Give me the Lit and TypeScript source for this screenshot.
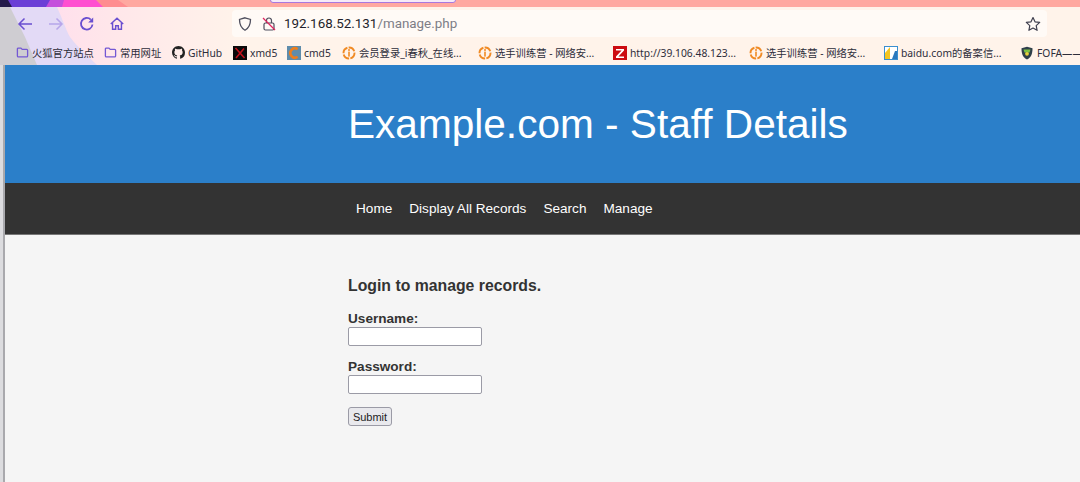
import { LitElement, html, css, svg } from "lit";
import { customElement } from "lit/decorators.js";

const folder = html`<svg class="fav small" viewBox="0 0 13 14"><path d="M1 3.200a1 1 0 0 1 1-1h2.800l1.400 1.400h4.800a1 1 0 0 1 1 1v6.200a1 1 0 0 1-1 1H2a1 1 0 0 1-1-1z" fill="none" stroke="#7458d4" stroke-width="1.400"/></svg>`;
const ichunqiu = html`<svg class="fav" viewBox="0 0 14 14"><circle cx="7" cy="7" r="5.500" fill="none" stroke="#f08a24" stroke-width="1.900" stroke-dasharray="7 1.300"/><rect x="6.200" y="5.600" width="1.600" height="5" fill="#f08a24"/><circle cx="7" cy="3.900" r="1" fill="#f08a24"/></svg>`;
const github = html`<svg class="fav small" viewBox="0 0 16 16"><path fill="#222" d="M8 0C3.580 0 0 3.580 0 8c0 3.540 2.290 6.530 5.470 7.590.4.070.55-.17.55-.38 0-.19-.01-.82-.01-1.490-2.010.37-2.530-.49-2.690-.94-.09-.23-.48-.94-.82-1.130-.28-.15-.68-.52-.01-.53.63-.01 1.080.58 1.230.82.72 1.210 1.870.87 2.330.66.07-.52.28-.87.51-1.070-1.780-.2-3.640-.89-3.640-3.950 0-.87.31-1.590.82-2.150-.08-.2-.36-1.020.08-2.120 0 0 .67-.21 2.200.82.64-.18 1.320-.27 2-.27s1.360.09 2 .27c1.530-1.040 2.200-.82 2.200-.82.44 1.100.16 1.920.08 2.120.51.56.82 1.270.82 2.150 0 3.070-1.870 3.750-3.650 3.950.29.25.54.73.54 1.480 0 1.070-.01 1.930-.01 2.200 0 .21.15.46.55.38A8.010 8.010 0 0 0 16 8c0-4.420-3.580-8-8-8z"/></svg>`;
const xmd5 = html`<svg class="fav" viewBox="0 0 14 14"><rect width="14" height="14" fill="#0a0a0a"/><path d="M2.500 2l9 10M11 2.500L3 12" stroke="#c3121c" stroke-width="1.600"/></svg>`;
const cmd5 = html`<svg class="fav" viewBox="0 0 14 14"><rect width="14" height="14" fill="#5f8cab"/><path d="M10.600 3.200A4.600 4.600 0 1 0 10.600 10.800" fill="none" stroke="#ee7d1c" stroke-width="2.600"/></svg>`;
const zfav = html`<svg class="fav" viewBox="0 0 14 14"><rect width="14" height="14" fill="#cc0b12"/><path d="M3 3h8v1.400L5.400 10.400H11V12H3v-1.400L8.600 4.600H3z" fill="#fff"/></svg>`;
const baidu = html`<svg class="fav" viewBox="0 0 14 14"><rect width="14" height="14" fill="#3a8fd0"/><rect x="1" y="1" width="12" height="12" fill="#fff"/><path d="M1 7l5-6v12H1z" fill="#f4c51f"/><path d="M8 13l3-8 2 0v8z" fill="#2a78bd"/></svg>`;
const fofa = html`<svg class="fav" viewBox="0 0 14 14"><path d="M1.500 2.200L7 .8l5.500 1.400c0 6-1.600 9.300-5.500 11.400C3.100 11.500 1.500 8.200 1.500 2.200z" fill="#2f3f4a"/><path d="M3.500 3.400h7l-1 3H4.500z" fill="#7cc243"/><circle cx="7" cy="7.800" r="1.900" fill="#e8d23c"/></svg>`;

const bookmarks = [
  { icon: folder, label: "火狐官方站点", w: 88 },
  { icon: folder, label: "常用网址", w: 68 },
  { icon: github, label: "GitHub", w: 61 },
  { icon: xmd5, label: "xmd5", w: 54 },
  { icon: cmd5, label: "cmd5", w: 55 },
  { icon: ichunqiu, label: "会员登录_i春秋_在线...", w: 136 },
  { icon: ichunqiu, label: "选手训练营 - 网络安...", w: 135 },
  { icon: zfav, label: "http://39.106.48.123...", w: 136 },
  { icon: ichunqiu, label: "选手训练营 - 网络安...", w: 135 },
  { icon: baidu, label: "baidu.com的备案信...", w: 136 },
  { icon: fofa, label: "FOFA——", w: 60 },
];

const themeArt = svg`
  <defs>
    <linearGradient id="fade" x1="0" x2="1" y1="0" y2="0">
      <stop offset="0" stop-color="#ffd9ee"/>
      <stop offset="0.45" stop-color="#ffe6ea"/>
      <stop offset="1" stop-color="#fff3ea"/>
    </linearGradient>
  </defs>
  <rect width="1080" height="65" fill="#fff3ea"/>
  <rect y="7" width="240" height="58" fill="url(#fade)"/>
  <rect width="1080" height="7" fill="#ffa8a0"/>
  <path d="M0 0H118L128 7H0z" fill="#ff8d90"/>
  <path d="M0 0H96L103 7H0z" fill="#ff4fd0"/>
  <path d="M0 0H64L62 7H0z" fill="#c54fdc"/>
  <path d="M0 0H50L46 7H0z" fill="#6b3fd6"/>
  <path d="M0 0H8L12 7H0z" fill="#241a4a"/>
  <path d="M0 7H57C62 18 66 30 70 37C78 48 88 56 97 65H0z" fill="#e3daf6"/>
  <path d="M0 7H10L25 37L37 65H0z" fill="#cfcdd2"/>
`;

@customElement("app-root")
export class AppRoot extends LitElement {
  static styles = css`
    :host { display: block; width: 1080px; height: 482px; overflow: hidden; font-family: "Liberation Sans", Arial, sans-serif; }
    .chrome { position: relative; height: 65px; box-sizing: border-box; padding-top: 7px; border-bottom: 1px solid #c9b9ad; }
    .art { position: absolute; inset: 0; width: 1080px; height: 65px; }
    .tab { position: absolute; left: 270px; top: -6px; width: 186px; height: 9px; background: #f7ebf8; border: 1px solid #a878e0; border-radius: 3px; box-sizing: border-box; }
    .toolbar { position: relative; height: 33px; display: flex; align-items: center; }
    .navs { display: flex; align-items: center; width: 232px; padding-left: 16px; box-sizing: border-box; gap: 13px; }
    .navs svg { width: 18px; height: 18px; flex: none; }
    .navs svg.home { width: 16px; height: 16px; }
    .url { width: 815px; height: 27px; background: #fffaf6; border-radius: 4px; display: flex; align-items: center; box-sizing: border-box; padding: 0 6px 0 5px; font: 13.400px Roboto, "Noto Sans", sans-serif; color: #1f1f2b; }
    .url svg { width: 16px; height: 16px; flex: none; }
    .url .lock { margin-left: 8px; margin-right: 7px; }
    .url .path { color: #7d7d86; }
    .url .spacer { flex: 1; }
    .bookmarks { position: relative; height: 24px; box-sizing: border-box; padding: 1px 0 0 16px; display: flex; align-items: center; font: 10.300px "Noto Sans", "Noto Sans CJK SC", sans-serif; color: #2d2d3a; white-space: nowrap; }
    .bm { display: flex; align-items: center; gap: 3px; flex: none; overflow: hidden; }
    .fav { width: 14px; height: 14px; flex: none; }
    .fav.small { width: 13px; height: 13px; }
    .main { display: flex; height: 417px; }
    .sliver { width: 5px; flex: none; background: linear-gradient(to right, #dcdcdf 0 3px, #a9a9ad 3px 5px); }
    .page { flex: 1; background: #f5f5f5; color: #333; }
    header { height: 118px; background: #2b7fc9; color: #fff; box-sizing: border-box; padding-left: 343px; display: flex; align-items: center; }
    h1 { margin: 0; font-size: 40.600px; font-weight: 400; }
    nav { height: 52px; background: #333; border-bottom: 1px solid #777; box-sizing: border-box; padding-left: 351px; display: flex; align-items: center; gap: 17px; color: #fff; font-size: 13.600px; }
    form { padding: 42px 0 0 343px; }
    h2 { margin: 0 0 16px; font-size: 15.800px; line-height: 18px; font-weight: 700; color: #333; }
    label { display: block; font-size: 13.600px; line-height: 15px; font-weight: 700; color: #333; }
    input { display: block; width: 134px; height: 19px; box-sizing: border-box; margin: 1px 0 13px; padding: 0 2px; background: #fff; border: 1px solid #9b9ba6; border-radius: 2px; }
    button { display: block; margin-top: 13px; width: 44px; height: 19px; padding: 0; font: 11px "Liberation Sans", Arial, sans-serif; color: #222; background: #e9e9ed; border: 1px solid #9b9ba6; border-radius: 3px; }
  `;

  render() {
    return html`
      <div class="chrome">
        <svg class="art" viewBox="0 0 1080 65" preserveAspectRatio="none">${themeArt}</svg>
        <div class="tab"></div>
        <div class="toolbar">
          <div class="navs">
            <svg viewBox="0 0 18 18" fill="none" stroke="#6a4fd0" stroke-width="1.500"><path d="M16 9H3M8.500 3.500L3 9l5.500 5.500"/></svg>
            <svg viewBox="0 0 18 18" fill="none" stroke="#b7a6ea" stroke-width="1.500"><path d="M2 9h13M9.500 3.500L15 9l-5.500 5.500"/></svg>
            <svg viewBox="0 0 18 18" fill="none" stroke="#6a4fd0" stroke-width="1.800"><path d="M14.500 9.500A5.800 5.800 0 1 1 12.800 4.600"/><path d="M15.200 2.400v5h-5z" fill="#6a4fd0" stroke="none"/></svg>
            <svg class="home" viewBox="0 0 18 18" fill="none" stroke="#6a4fd0" stroke-width="1.600"><path d="M2 9l7-6.500L16 9M4 7.500V15h3.500v-4h3v4H14V7.500"/></svg>
          </div>
          <div class="url">
            <svg viewBox="0 0 16 16" fill="none" stroke="#4f4f5e" stroke-width="1.300"><path d="M8 1.800l5.500 1.700c0 5-1.500 8.500-5.500 10.700C4 12 2.500 8.500 2.500 3.500z"/></svg>
            <svg class="lock" viewBox="0 0 16 16" fill="none" stroke="#4f4f5e" stroke-width="1.200"><rect x="3" y="7" width="10" height="7" rx="1.500"/><path d="M5.500 7V4.500a2.500 2.500 0 0 1 5 0V7"/><path d="M2 2l12 12" stroke="#e0245e" stroke-width="1.300"/></svg>
            <span>192.168.52.131</span><span class="path">/manage.php</span>
            <span class="spacer"></span>
            <svg viewBox="0 0 16 16" fill="none" stroke="#3f3f4e" stroke-width="1.200"><path d="M8 1.500l2 4.300 4.700.6-3.500 3.200.9 4.700L8 12l-4.100 2.300.9-4.700L1.300 6.400 6 5.800z" stroke-linejoin="round"/></svg>
          </div>
        </div>
        <div class="bookmarks">
          ${bookmarks.map(b => html`<div class="bm" style="width:${b.w}px">${b.icon}<span>${b.label}</span></div>`)}
        </div>
      </div>
      <div class="main">
        <div class="sliver"></div>
        <div class="page">
          <header><h1>Example.com - Staff Details</h1></header>
          <nav><span>Home</span><span>Display All Records</span><span>Search</span><span>Manage</span></nav>
          <form @submit=${(e: Event) => e.preventDefault()}>
            <h2>Login to manage records.</h2>
            <label for="u">Username:</label>
            <input id="u" type="text" />
            <label for="p">Password:</label>
            <input id="p" type="password" />
            <button type="submit">Submit</button>
          </form>
        </div>
      </div>
    `;
  }
}
